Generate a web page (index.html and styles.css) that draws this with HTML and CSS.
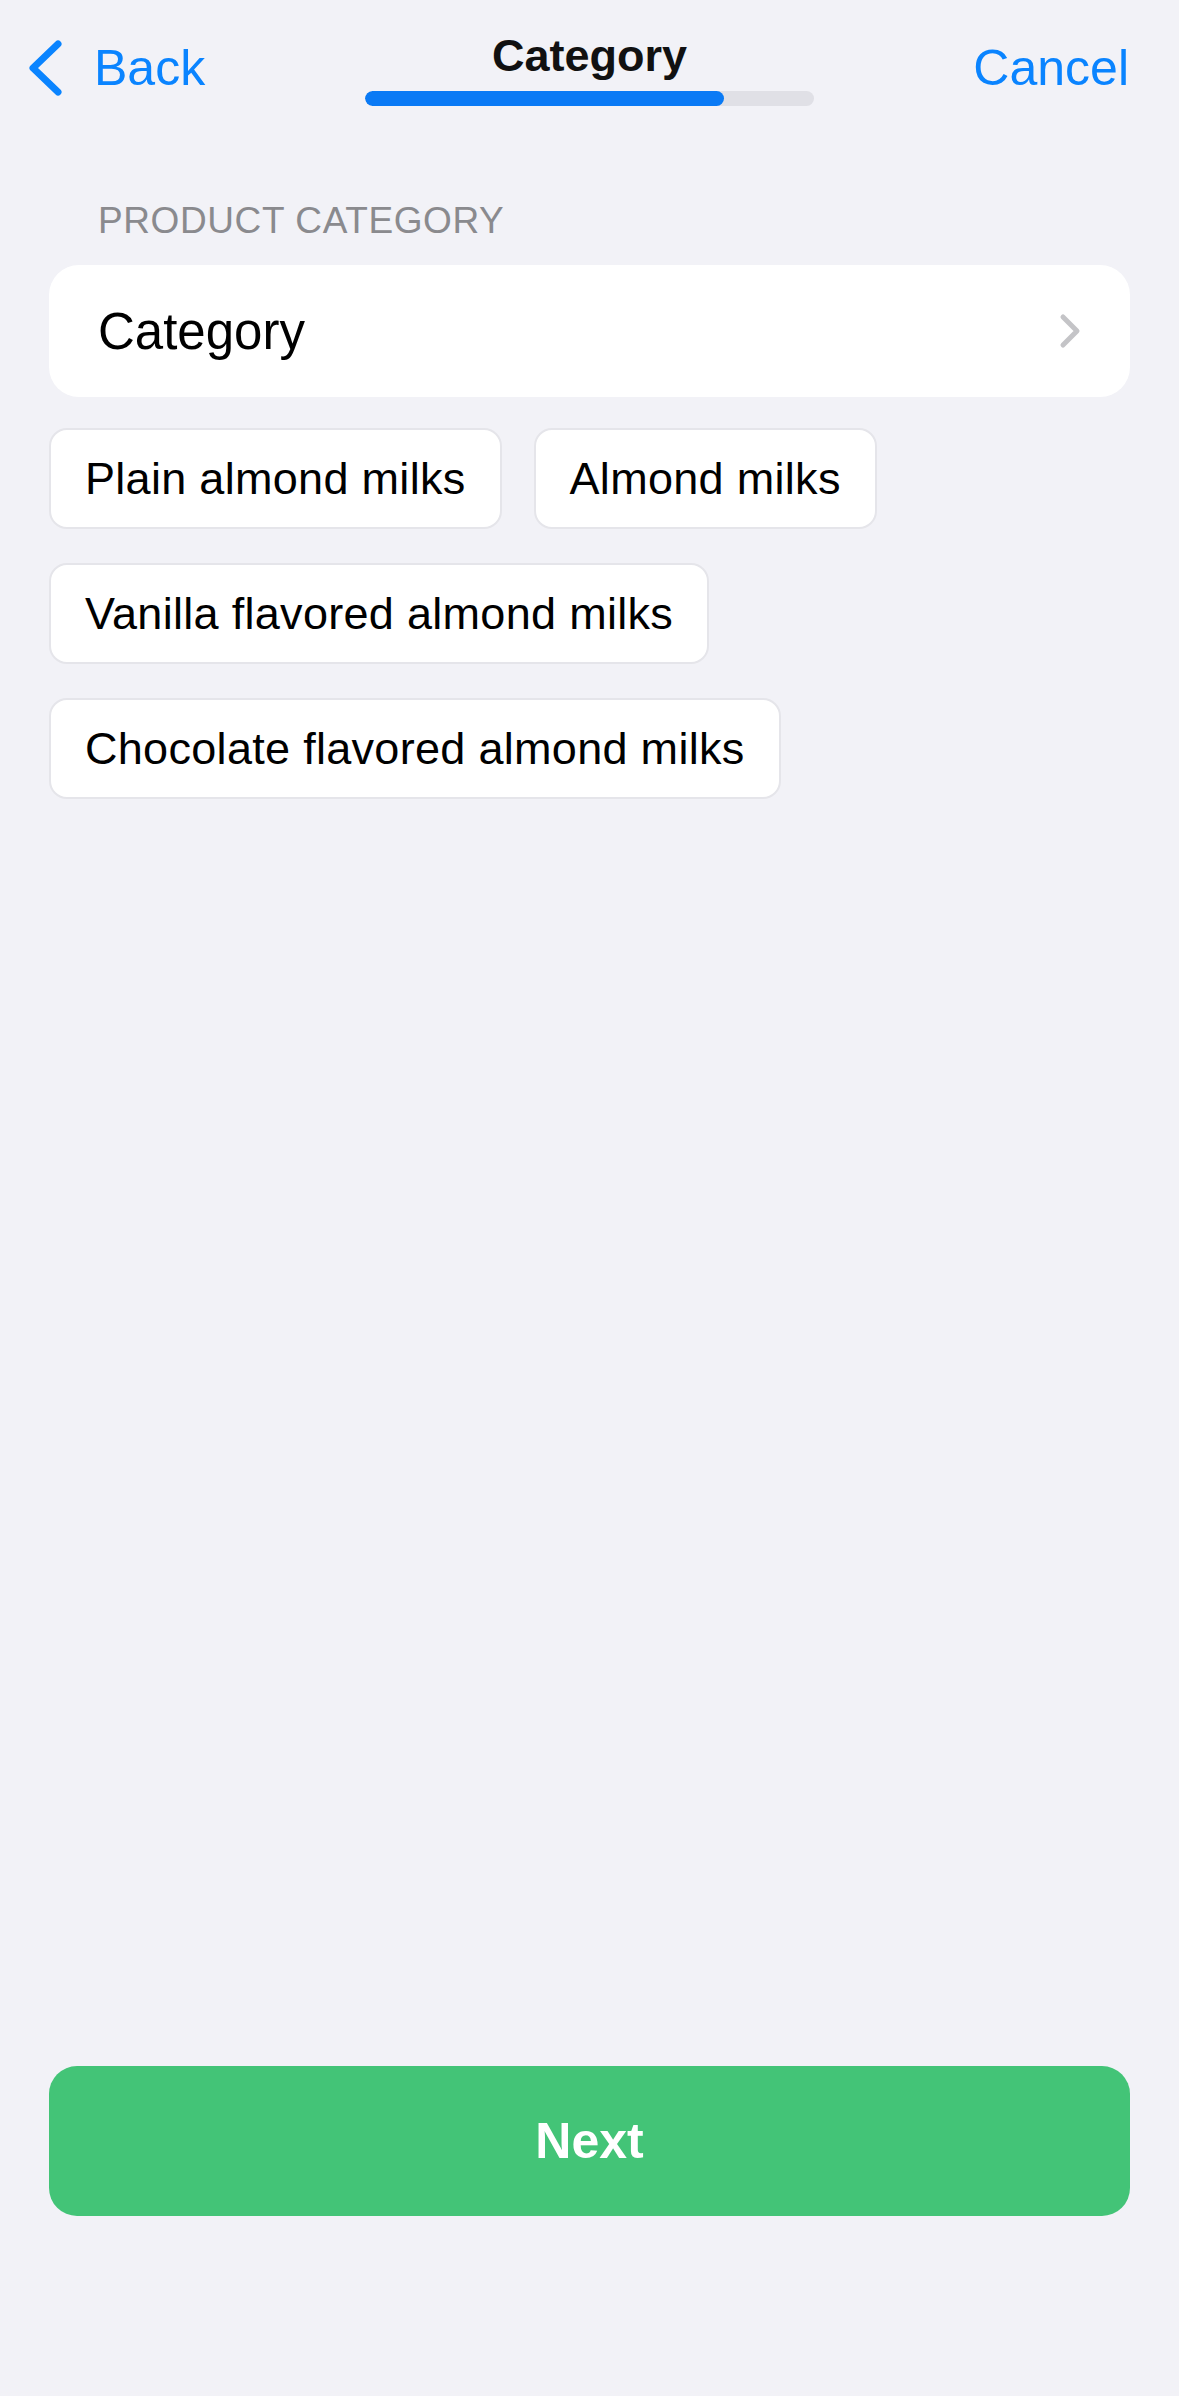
FILE: index.html
```html
<!DOCTYPE html>
<html lang="en">
<head>
  <meta charset="UTF-8">
  <meta name="viewport" content="width=device-width, initial-scale=1.0">
  <title>Category</title>
  <link rel="stylesheet" href="styles.css">
</head>
<body>
  <div class="screen">

    <!-- Navigation bar -->
    <div class="nav">
      <a class="nav-back" href="#">
        <svg class="back-icon" width="36" height="56" viewBox="0 0 36 56">
          <path d="M30 4 L5 28 L30 52" fill="none" stroke="#0a84ff" stroke-width="7" stroke-linecap="round" stroke-linejoin="round"/>
        </svg>
        <span>Back</span>
      </a>
      <div class="nav-center">
        <div class="nav-title">Category</div>
        <div class="progress">
          <div class="progress-fill" style="width: 80%"></div>
        </div>
      </div>
      <a class="nav-cancel" href="#">Cancel</a>
    </div>

    <div class="content">
      <div class="section-label">PRODUCT CATEGORY</div>

      <div class="card-row">
        <span>Category</span>
        <svg class="chevron" width="22" height="36" viewBox="0 0 22 36">
          <path d="M4 4 L18 18 L4 32" fill="none" stroke="#c4c4c7" stroke-width="5" stroke-linecap="round" stroke-linejoin="round"/>
        </svg>
      </div>

      <div class="chips" id="chips">
        <!-- suggestions are added here -->
      </div>
    </div>

    <button class="btn-next">Next</button>
  </div>

  <script>
    // Suggested categories
    const suggestions = [
      'Plain almond milks',
      'Almond milks',
      'Vanilla flavored almond milks',
      'Chocolate flavored almond milks'
    ];

    const chips = document.getElementById('chips');
    suggestions.forEach(name => {
      const chip = document.createElement('div');
      chip.className = 'chip';
      chip.textContent = name;
      chips.appendChild(chip);
    });
  </script>
</body>
</html>
```

FILE: styles.css
```css
body {
  margin: 0;
  background-color: #f2f2f7;
  font-family: "Liberation Sans", Arial, sans-serif;
  color: #000;
}
.screen {
  display: flex;
  flex-direction: column;
  height: 2396px;
  box-sizing: border-box;
  padding-bottom: 180px;
}
.nav {
  display: grid;
  grid-template-columns: 1fr auto 1fr;
  align-items: start;
  padding: 30px 28px 0;
}
.nav-back {
  display: flex;
  align-items: center;
  gap: 30px;
  margin-top: 9px;
  color: #0a84ff;
  text-decoration: none;
  font-size: 50px;
  line-height: 58px;
}
.back-icon {
  display: block;
}
.nav-cancel {
  justify-self: end;
  margin-top: 9px;
  margin-right: 22px;
  color: #0a84ff;
  text-decoration: none;
  font-size: 50px;
  line-height: 58px;
}
.nav-center {
  display: flex;
  flex-direction: column;
  align-items: center;
}
.nav-title {
  font-size: 45px;
  font-weight: bold;
  line-height: 52px;
  color: #111;
}
.progress {
  width: 449px;
  height: 15px;
  margin-top: 9px;
  border-radius: 8px;
  background-color: #e0e0e6;
  overflow: hidden;
}
.progress-fill {
  height: 100%;
  border-radius: 8px;
  background-color: #0a7af5;
}
.content {
  padding: 0 49px;
}
.section-label {
  margin-top: 93px;
  padding-left: 49px;
  font-size: 37px;
  line-height: 43px;
  letter-spacing: 0.6px;
  color: #8a8a8e;
}
.card-row {
  display: flex;
  align-items: center;
  justify-content: space-between;
  height: 132px;
  margin-top: 23px;
  padding: 0 49px;
  background-color: #fff;
  border-radius: 30px;
  font-size: 51px;
}
.chevron {
  display: block;
}
.chips {
  display: flex;
  flex-wrap: wrap;
  column-gap: 32px;
  row-gap: 34px;
  margin-top: 31px;
}
.chip {
  display: flex;
  align-items: center;
  box-sizing: border-box;
  height: 101px;
  padding: 0 34px;
  background-color: #fff;
  border: 2px solid #e5e5ea;
  border-radius: 18px;
  font-size: 45px;
  letter-spacing: 0.3px;
}
.btn-next {
  margin: auto 49px 0;
  height: 150px;
  border: none;
  border-radius: 28px;
  background-color: #43c477;
  color: #fff;
  font-family: "Liberation Sans", Arial, sans-serif;
  font-size: 50px;
  font-weight: bold;
}
```
